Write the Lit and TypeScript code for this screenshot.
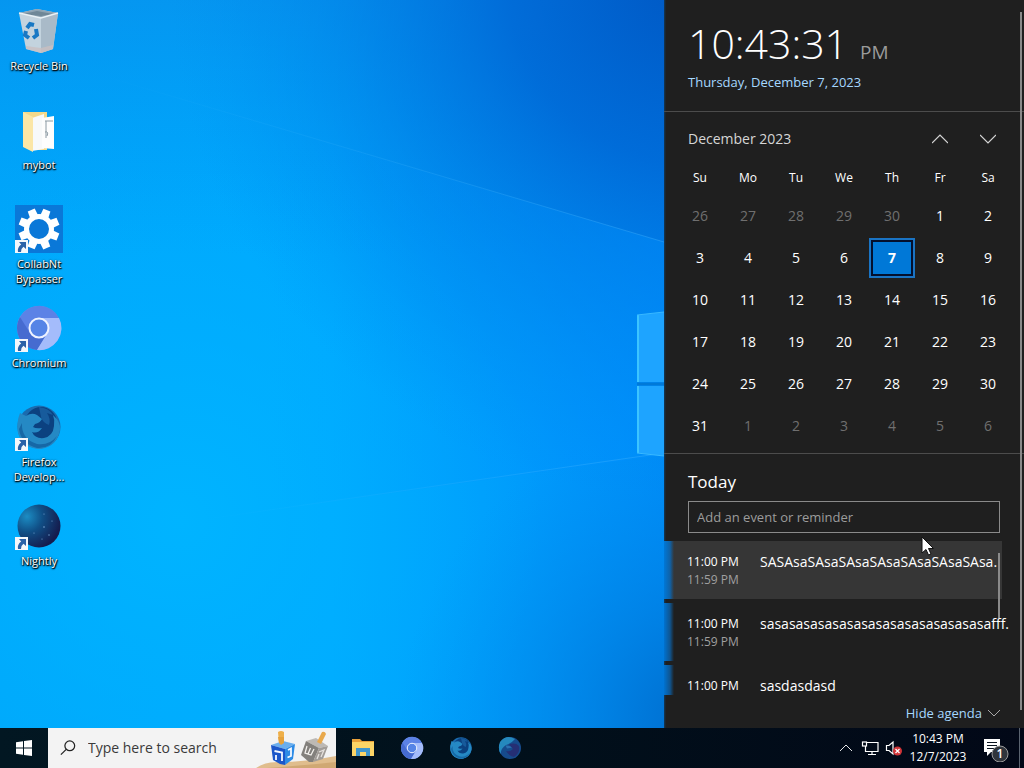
import { LitElement, html, css, svg, type TemplateResult } from "lit"
import { customElement, property, state } from "lit/decorators.js"
import { classMap } from "lit/directives/class-map.js"

interface AgendaEvent {
  start: string
  end?: string
  title: string
}

const recycleBin = svg`
  <svg viewBox="0 0 48 48">
    <path d="M4 6 L22 2 L43 6 L38 42 L26 46 L11 42 Z" fill="#c3d3de" />
    <path d="M4 6 L22 2 L43 6 L26 11 Z" fill="#8fa4b3" />
    <path d="M8 7 L22 4 L38 7 L26 9 Z" fill="#6f8797" />
    <path d="M26 11 L43 6 L38 42 L26 46 Z" fill="#a9bac8" />
    <path d="M11 39 L26 41 L38 38 V42 L26 46 L11 42 Z" fill="#c9bfc0" opacity="0.8" />
    <path d="M4 6 L26 11 L43 6" fill="none" stroke="#e8f1f6" stroke-width="1.4" />
    <g fill="none" stroke="#1878c4" stroke-width="4">
      <path d="M12 21 L15 17 L19 18" />
      <path d="M21 22 L22 28 L18 31" />
      <path d="M14 31 L10 28 L11 24" />
    </g>
  </svg>
`

const folder = svg`
  <svg viewBox="0 0 48 48">
    <path d="M8 6 H32 V44 H16 L8 40 Z" fill="#f3d98b" />
    <path d="M17 12 L29 8 V43 L17 45 Z" fill="#f7f9fa" />
    <path d="M27 12 L39 10 V43 L27 42 Z" fill="#fdfdfd" />
    <path d="M30 15 H38 M31 15 V32 M30 26 q4 -1 2 4" fill="none" stroke="#8c9aa3" stroke-width="1" />
    <path d="M8 6 L18 11 V46 L8 41 Z" fill="#fbe6a6" />
  </svg>
`

const gear = svg`
  <svg viewBox="0 0 48 48">
    <rect width="48" height="48" fill="#0a78d8" />
    <g fill="#fff">
      ${[0, 45, 90, 135, 180, 225, 270, 315].map(
        (a) => svg`<path d="M20 11 L20.500 3.500 H28 L28.500 11 Z" transform="rotate(${a + 22} 24 24)" />`
      )}
    </g>
    <circle cx="24" cy="24" r="12.500" fill="none" stroke="#fff" stroke-width="5" />
  </svg>
`

const chromium = svg`
  <svg viewBox="0 0 48 48">
    <circle cx="24" cy="24" r="22" fill="#7a9af2" />
    <path d="M24 24 L5 13 A22 22 0 0 0 22 46 L33 29 Z" fill="#466bd0" />
    <path d="M24 14 H44 A22 22 0 0 1 22 46 L33 28 Z" fill="#a4bcfb" />
    <path d="M24 14 H44 A22 22 0 0 0 5 13 L15 29 Z" fill="#5c82e6" />
    <circle cx="24" cy="24" r="9.500" fill="#5584e6" stroke="#eef3ff" stroke-width="2" />
  </svg>
`

const firefox = svg`
  <svg viewBox="0 0 48 48">
    <circle cx="24" cy="24" r="21.500" fill="#1b6bae" />
    <circle cx="26" cy="20" r="16" fill="#0b4180" />
    <path d="M24 4 Q34 5 38 12 L32 10 Q36 16 34 22 Q28 20 26 14 Z" fill="#175b9c" />
    <path d="M5 10 L11 13 Q17 9 22 12 L27 16 Q25 20 20 21 L18 24 Q21 26 27 25 Q23 31 17 29 Q20 36 29 35 Q38 33 39 23 Q40 17 38 12 Q46 19 45 27 Q42 43 26 46 Q8 46 3 30 Q1 20 5 10 Z" fill="#2589c4" />
    <path d="M7 20 Q6 36 22 41 Q34 43 42 33 Q36 46 22 45 Q6 41 4 26 Z" fill="#1668a6" />
  </svg>
`

const nightly = svg`
  <svg viewBox="0 0 48 48">
    <defs>
      <radialGradient id="night" cx="0.22" cy="0.28" r="0.8">
        <stop offset="0" stop-color="#1c8dc4" />
        <stop offset="0.45" stop-color="#104f86" />
        <stop offset="1" stop-color="#151c4e" />
      </radialGradient>
    </defs>
    <circle cx="24" cy="24" r="21.500" fill="url(#night)" />
    <g fill="#79a7d6">
      <circle cx="29" cy="12" r="0.600" />
      <circle cx="37" cy="19" r="0.600" />
      <circle cx="29" cy="25" r="0.800" />
      <circle cx="19" cy="31" r="0.600" />
      <circle cx="34" cy="33" r="0.700" />
      <circle cx="27" cy="37" r="0.600" />
    </g>
  </svg>
`

const nightlySmall = svg`
  <svg viewBox="0 0 48 48">
    <circle cx="24" cy="24" r="22" fill="#164b8c" />
    <path d="M4 12 Q16 -4 34 6 Q28 14 16 18 Q6 24 5 36 Q-1 24 4 12 Z" fill="#2588bd" />
    <path d="M22 17 Q34 12 42 20 Q45 34 32 42 Q22 40 16 30 Q24 32 30 26 Z" fill="#252f74" />
    <path d="M15 19 Q22 18 28 23 Q22 25 18 25 Z" fill="#2a6fb0" />
  </svg>
`

const shortcutArrow = svg`
  <svg class="shortcut" viewBox="0 0 13 13">
    <rect width="13" height="13" fill="#f4f7fb" />
    <path d="M4 2 H11 V9 L8.500 6.800 Q6 8.500 6 12 H3 Q2 7.500 6.200 4.500 Z" fill="#2b62a8" />
  </svg>
`

const explorer = svg`
  <svg viewBox="0 0 24 24">
    <path d="M1 3 H9 L11 5 H23 V20 H1 Z" fill="#e9a13a" />
    <path d="M1 6 H23 V20 H1 Z" fill="#fcd466" />
    <path d="M5 20 V12 H19 V20 H15 V16 H9 V20 Z" fill="#3f95cc" />
  </svg>
`

const windowsLogo = svg`
  <svg viewBox="0 0 16 16">
    <path d="M0 2.300 L7 1.300 V7.500 H0 Z M8 1.100 L16 0 V7.500 H8 Z M0 8.500 H7 V14.700 L0 13.700 Z M8 8.500 H16 V16 L8 14.900 Z" fill="#fff" />
  </svg>
`

const magnifier = svg`
  <svg class="magnifier" viewBox="0 0 18 18" fill="none" stroke="#222" stroke-width="1.400">
    <circle cx="11" cy="6.500" r="5.500" />
    <path d="M7 10.500 L1 16.500" />
  </svg>
`

const dreidels = svg`
  <svg class="dreidels" viewBox="0 0 80 40">
    <path d="M0 40 Q8 34 22 34 Q50 34 80 28 V40 Z" fill="#e0bd8d" />
    <path d="M10 40 Q40 38 80 34 V40 Z" fill="#d0a873" />
    <path d="M22 4 Q25 2 28 4 V15 H23 Z" fill="#eeaf49" />
    <path d="M15 17 L27 13 L39 16 L29 21 Z" fill="#6aaeee" />
    <path d="M22 9 H28 V15 L25 17 L23 15 Z" fill="#e5a13c" />
    <path d="M15 17 L29 21 V37 L24 36 L17 32 Z" fill="#1b56c9" />
    <path d="M29 21 L39 16 L37 31 L29 37 Z" fill="#2d8be6" />
    <path d="M18.500 23 L26 24.500 V33 M20 27 V32" fill="none" stroke="#f4f8ff" stroke-width="1.800" />
    <path d="M32 22 L35 20.500 V28 L31.500 29.500" fill="none" stroke="#f4f8ff" stroke-width="1.800" />
    <path d="M50 13 L60 10 L72 18 L63 20 Z" fill="#bdb9b4" />
    <path d="M66 4 Q69 3 70 6 L65 16 L61 14 Z" fill="#e9a94c" />
    <path d="M50 13 L63 20 L57 34 L53 34 L45 27 Z" fill="#83807c" />
    <path d="M63 20 L72 18 L67 31 L57 34 Z" fill="#a19c97" />
    <path d="M51 18 L49 25 L55 27 L58 21 M54.500 20 L52 26" fill="none" stroke="#f2efec" stroke-width="1.300" />
    <path d="M63 24 L68 22 L65 29 M63 26 L61 31" fill="none" stroke="#e6e2de" stroke-width="1.300" />
  </svg>
`

const chevron = (up: boolean) => svg`
  <svg class="chevron" viewBox="0 0 16 10" fill="none" stroke="currentColor" stroke-width="1.200">
    <path d=${up ? "M0 9 L8 1 L16 9" : "M0 1 L8 9 L16 1"} />
  </svg>
`

/**
 * desktop-icon - one shortcut in the desktop grid
 */
@customElement("desktop-icon")
export class DesktopIcon extends LitElement {
  static styles = css`
    :host {
      display: block;
    }

    button {
      display: flex;
      flex-direction: column;
      align-items: center;
      width: 100%;
      padding: 7px 0 0;
      border: 0;
      background: none;
      color: #fff;
      font: 11px/15px "Open Sans", "Noto Sans", sans-serif;
      text-shadow: 0 1px 2px #000, 1px 1px 1px #000, 0 0 2px rgba(0, 0, 0, 0.6);
    }

    .picture {
      position: relative;
      width: 48px;
      height: 48px;
      margin-bottom: 3px;
    }

    svg {
      display: block;
      width: 48px;
      height: 48px;
    }

    .shortcut {
      position: absolute;
      left: 0;
      bottom: 0;
      width: 13px;
      height: 13px;
    }

    .label {
      white-space: pre-line;
    }
  `

  @property({ type: String })
  label = ""

  @property({ type: Boolean })
  shortcut = false

  @property({ attribute: false })
  picture?: TemplateResult

  render() {
    return html`
      <button type="button">
        <span class="picture">
          ${this.picture}${this.shortcut ? shortcutArrow : ""}
        </span>
        <span class="label">${this.label}</span>
      </button>
    `
  }
}

/**
 * calendar-flyout - clock, month and agenda
 */
@customElement("calendar-flyout")
export class CalendarFlyout extends LitElement {
  static styles = css`
    :host {
      position: relative;
      display: flex;
      flex-direction: column;
      box-sizing: border-box;
      min-height: 0;
      background: linear-gradient(90deg, #123a5c, #1f1f1f 2px);
      color: #fff;
      font: 14px/20px "Open Sans", "Noto Sans", sans-serif;
    }

    button {
      padding: 0;
      border: 0;
      background: none;
      color: inherit;
      font: inherit;
    }

    header {
      padding: 16px 24px 19px;
      border-bottom: 1px solid #4c4c4c;
    }

    .clock {
      display: flex;
      align-items: baseline;
      gap: 12px;
      margin-bottom: 2px;
      font-size: 41px;
      font-weight: 300;
      line-height: 54px;
    }

    .clock small {
      color: #9b9b9b;
      font-size: 19px;
      font-weight: 400;
      line-height: 20px;
    }

    .date {
      display: block;
      color: #a6d8ff;
      font-size: 13px;
    }

    .month {
      padding: 0 12px 6px;
      border-bottom: 1px solid #4c4c4c;
    }

    .month-bar {
      display: flex;
      align-items: center;
      height: 54px;
      padding-left: 12px;
      color: #d6d6d6;
    }

    .month-bar h2 {
      flex: 1;
      margin: 0;
      font: inherit;
    }

    .month-bar button {
      width: 48px;
      height: 40px;
    }

    .chevron {
      width: 16px;
      height: 10px;
    }

    table {
      width: 100%;
      table-layout: fixed;
      border-spacing: 0;
    }

    th {
      height: 24px;
      padding: 0 0 5px;
      font-size: 12px;
      font-weight: 400;
      line-height: 24px;
    }

    td {
      height: 42px;
      padding: 0;
      text-align: center;
    }

    td button {
      width: 46px;
      height: 40px;
    }

    .outside {
      color: #6f6f6f;
    }

    .today {
      border: 2px solid #1a74c4;
      background: #0078d7;
      box-shadow: inset 0 0 0 2px #03102e;
      font-weight: 700;
    }

    .compose {
      padding: 12px 24px 8px;
    }

    .compose label {
      display: block;
      margin-bottom: 3px;
      font-size: 17px;
      line-height: 32px;
    }

    .compose input {
      display: block;
      box-sizing: border-box;
      width: 100%;
      height: 32px;
      padding: 0 8px;
      border: 1px solid #8a8a8a;
      border-radius: 0;
      background: transparent;
      color: #fff;
      font: 13px/20px "Open Sans", "Noto Sans", sans-serif;
    }

    .compose input::placeholder {
      color: #9c9c9c;
      opacity: 1;
    }

    .agenda {
      position: relative;
      flex: 1;
      min-height: 0;
      overflow: hidden;
    }

    ul {
      display: flex;
      flex-direction: column;
      gap: 4px;
      margin: 0;
      padding: 0 22px 0 0;
      list-style: none;
    }

    li {
      display: grid;
      grid-template-columns: 73px minmax(0, 1fr);
      box-sizing: border-box;
      height: 58px;
      padding: 12px 0 0 23px;
      background: linear-gradient(90deg, #0072d0, #0f5590 6px, #1f1f1f 10px);
      font-size: 12px;
      line-height: 18px;
    }

    li.hovered {
      background: linear-gradient(90deg, #0078d7, #0f62a8 6px, #363636 10px);
    }

    .title {
      font-size: 14px;
      white-space: nowrap;
    }

    .end {
      display: block;
      color: #a0a0a0;
    }

    footer {
      display: flex;
      justify-content: flex-end;
      box-sizing: border-box;
      height: 33px;
      padding: 2px 24px 0 0;
    }

    .hide {
      display: flex;
      align-items: center;
      gap: 6px;
      color: #a6d8ff;
      font-size: 13px;
    }

    .hide .chevron {
      width: 12px;
      height: 8px;
      color: #b8b8b8;
    }

    .agenda-thumb,
    .panel-thumb {
      position: absolute;
      width: 2px;
      background: #8a8a8a;
    }

    .agenda-thumb {
      top: 12px;
      right: 24px;
      height: 65px;
    }

    .panel-thumb {
      top: 12px;
      right: 2px;
      bottom: 18px;
    }
  `

  @state()
  private events: AgendaEvent[] = [
    { start: "11:00 PM", end: "11:59 PM", title: "SASAsaSAsaSAsaSAsaSAsaSAsaSAsa." },
    { start: "11:00 PM", end: "11:59 PM", title: "sasasasasasasasasasasasasasasasafff." },
    { start: "11:00 PM", title: "sasdasdasd" },
  ]

  private get weeks() {
    // the grid starts on Sunday, November 26
    const first = Date.UTC(2023, 10, 26)
    return Array.from({ length: 6 }, (_, w) =>
      Array.from({ length: 7 }, (_, d) => new Date(first + (w * 7 + d) * 86400000))
    )
  }

  private renderDay(date: Date) {
    const inMonth = date.getUTCMonth() === 11
    const day = date.getUTCDate()
    const classes = { outside: !inMonth, today: inMonth && day === 7 }
    return html`<td><button type="button" class=${classMap(classes)}>${day}</button></td>`
  }

  render() {
    return html`
      <header>
        <div class="clock">10:43:31 <small>PM</small></div>
        <button type="button" class="date">Thursday, December 7, 2023</button>
      </header>
      <section class="month">
        <div class="month-bar">
          <h2>December 2023</h2>
          <button type="button" aria-label="Previous month">${chevron(true)}</button>
          <button type="button" aria-label="Next month">${chevron(false)}</button>
        </div>
        <table>
          <thead>
            <tr>
              ${["Su", "Mo", "Tu", "We", "Th", "Fr", "Sa"].map((d) => html`<th>${d}</th>`)}
            </tr>
          </thead>
          <tbody>
            ${this.weeks.map((week) => html`<tr>${week.map((d) => this.renderDay(d))}</tr>`)}
          </tbody>
        </table>
      </section>
      <div class="compose">
        <label for="event">Today</label>
        <input id="event" type="text" placeholder="Add an event or reminder" />
      </div>
      <div class="agenda">
        <ul>
          ${this.events.map(
            (e, i) => html`
              <li class=${classMap({ hovered: i === 0 })}>
                <div>${e.start}${e.end ? html`<span class="end">${e.end}</span>` : ""}</div>
                <div class="title">${e.title}</div>
              </li>
            `
          )}
        </ul>
        <span class="agenda-thumb"></span>
      </div>
      <footer>
        <button type="button" class="hide">Hide agenda ${chevron(false)}</button>
      </footer>
      <span class="panel-thumb"></span>
    `
  }
}

/**
 * task-bar - start button, search box, pinned apps and tray
 */
@customElement("task-bar")
export class TaskBar extends LitElement {
  static styles = css`
    :host {
      display: flex;
      height: 40px;
      background: linear-gradient(90deg, #021722, #01101b 50%, #020817);
      color: #fff;
      font: 12px/18px "Open Sans", "Noto Sans", sans-serif;
    }

    button {
      display: flex;
      flex: none;
      align-items: center;
      justify-content: center;
      padding: 0;
      border: 0;
      background: none;
      color: inherit;
      font: inherit;
    }

    .start {
      width: 48px;
    }

    .start svg {
      width: 16px;
      height: 16px;
    }

    .search {
      display: flex;
      align-items: center;
      gap: 12px;
      box-sizing: border-box;
      width: 288px;
      padding-left: 12px;
      background: #f3f3f3;
    }

    .magnifier {
      flex: none;
      width: 16px;
      height: 16px;
    }

    .search input {
      flex: 1;
      min-width: 0;
      padding: 0;
      border: 0;
      background: none;
      font: 14px/20px "Open Sans", "Noto Sans", sans-serif;
    }

    .search input::placeholder {
      color: #3a3a3a;
      opacity: 1;
    }

    .dreidels {
      flex: none;
      width: 80px;
      height: 40px;
    }

    .apps {
      display: flex;
      flex: 1;
      padding-left: 2px;
    }

    .apps button {
      width: 49px;
    }

    .apps svg {
      width: 24px;
      height: 24px;
    }

    .tray {
      display: flex;
    }

    .tray button {
      width: 24px;
    }

    .tray .chevron {
      width: 12px;
      height: 8px;
    }

    .tray .glyph {
      width: 18px;
      height: 18px;
    }

    .tray .clock {
      flex-direction: column;
      width: 64px;
    }

    .tray .actions {
      width: 50px;
      border-right: 1px solid #5b6470;
      margin-right: 4px;
    }

    .actions svg {
      width: 28px;
      height: 28px;
    }
  `

  render() {
    return html`
      <button type="button" class="start" aria-label="Start">${windowsLogo}</button>
      <label class="search">
        ${magnifier}
        <input type="text" aria-label="Search" placeholder="Type here to search" />
        ${dreidels}
      </label>
      <div class="apps">
        <button type="button" aria-label="File Explorer">${explorer}</button>
        <button type="button" aria-label="Chromium">${chromium}</button>
        <button type="button" aria-label="Firefox">${firefox}</button>
        <button type="button" aria-label="Nightly">${nightlySmall}</button>
      </div>
      <div class="tray">
        <button type="button" aria-label="Show hidden icons">${chevron(true)}</button>
        <button type="button" aria-label="Network">
          <svg class="glyph" viewBox="0 0 18 18" fill="none" stroke="#fff" stroke-width="1.200">
            <path d="M6 3.500 H17 V12.500 H4.500 V7 M11 12.500 V15.500 M7 15.500 H15" />
            <rect x="1.500" y="3" width="4" height="4" />
          </svg>
        </button>
        <button type="button" aria-label="Volume">
          <svg class="glyph" viewBox="0 0 18 18">
            <path d="M1.500 6.500 H4 L8 3 V15 L4 11.500 H1.500 Z" fill="none" stroke="#fff" stroke-width="1.200" />
            <circle cx="12.500" cy="12" r="4.500" fill="#d13438" />
            <path d="M10.500 10 L14.500 14 M14.500 10 L10.500 14" stroke="#fff" stroke-width="1.200" />
          </svg>
        </button>
        <button type="button" class="clock"><span>10:43 PM</span><span>12/7/2023</span></button>
        <button type="button" class="actions" aria-label="1 new notification">
          <svg viewBox="0 0 28 28">
            <path d="M3 5 H19 V18 H10 L6 22 V18 H3 Z" fill="#fff" />
            <path d="M6 8.500 H16 M6 11.500 H16 M6 14.500 H13" stroke="#0a1420" stroke-width="1.200" />
            <circle cx="19" cy="20" r="8" fill="#30353c" stroke="#9a9a9a" />
            <text x="19" y="24" fill="#fff" font-size="12" font-weight="600" text-anchor="middle">1</text>
          </svg>
        </button>
      </div>
    `
  }
}

@customElement("app-root")
export class AppRoot extends LitElement {
  static styles = css`
    :host {
      position: relative;
      display: grid;
      grid-template-rows: minmax(0, 1fr) auto;
      height: 100vh;
      overflow: hidden;
    }

    .desktop {
      position: relative;
      display: grid;
      grid-template-columns: 1fr 360px;
      min-height: 0;
    }

    .wallpaper {
      position: absolute;
      inset: 0 360px 0 0;
      width: calc(100% - 360px);
      height: 100%;
    }

    .icons {
      position: relative;
      display: grid;
      grid-template-columns: 78px;
      grid-auto-rows: 99px;
    }

    .pointer {
      position: absolute;
      left: 921px;
      top: 536px;
      width: 13px;
      height: 20px;
    }
  `

  private shortcuts = [
    { label: "Recycle Bin", picture: recycleBin, shortcut: false },
    { label: "mybot", picture: folder, shortcut: false },
    { label: "CollabNt\nBypasser", picture: gear, shortcut: true },
    { label: "Chromium", picture: chromium, shortcut: true },
    { label: "Firefox\nDevelop...", picture: firefox, shortcut: true },
    { label: "Nightly", picture: nightly, shortcut: true },
  ]

  render() {
    return html`
      <main class="desktop">
        <svg class="wallpaper" viewBox="0 0 664 728" preserveAspectRatio="xMaxYMid slice">
          <defs>
            <linearGradient id="base" x1="0" y1="0" x2="1" y2="0">
              <stop offset="0" stop-color="#00a8fb" />
              <stop offset="0.5" stop-color="#00aaff" />
              <stop offset="0.8" stop-color="#009afb" />
              <stop offset="1" stop-color="#008cf8" />
            </linearGradient>
            <radialGradient id="corner" gradientUnits="userSpaceOnUse" cx="690" cy="-20" r="520">
              <stop offset="0" stop-color="#0058c4" />
              <stop offset="0.35" stop-color="#0066d4" stop-opacity="0.85" />
              <stop offset="1" stop-color="#0088ec" stop-opacity="0" />
            </radialGradient>
            <radialGradient id="glow" gradientUnits="userSpaceOnUse" cx="180" cy="520" r="360">
              <stop offset="0" stop-color="#00b4ff" />
              <stop offset="1" stop-color="#00b0ff" stop-opacity="0" />
            </radialGradient>
            <linearGradient id="top" x1="0" y1="0" x2="0" y2="1">
              <stop offset="0" stop-color="#0a84e4" stop-opacity="0.5" />
              <stop offset="0.35" stop-color="#0090f0" stop-opacity="0" />
            </linearGradient>
            <radialGradient id="floor" gradientUnits="userSpaceOnUse" cx="700" cy="720" r="300">
              <stop offset="0" stop-color="#006ccc" />
              <stop offset="0.4" stop-color="#007cdc" stop-opacity="0.6" />
              <stop offset="1" stop-color="#0090f0" stop-opacity="0" />
            </radialGradient>
            <linearGradient id="ray" x1="0" y1="0" x2="1" y2="0">
              <stop offset="0" stop-color="#4cc0ff" stop-opacity="0" />
              <stop offset="1" stop-color="#4cb8ff" stop-opacity="0.35" />
            </linearGradient>
            <linearGradient id="beam" x1="0" y1="0" x2="1" y2="0">
              <stop offset="0.3" stop-color="#0098ff" stop-opacity="0" />
              <stop offset="1" stop-color="#0090ff" stop-opacity="0.4" />
            </linearGradient>
          </defs>
          <rect width="664" height="728" fill="url(#base)" />
          <rect width="664" height="728" fill="url(#glow)" />
          <rect width="664" height="728" fill="url(#top)" />
          <rect width="664" height="728" fill="url(#corner)" />
          <rect width="664" height="728" fill="url(#floor)" />
          <path d="M100 75 L664 242 V455 L200 520 Z" fill="url(#beam)" />
          <path d="M100 75 L664 242" stroke="url(#ray)" />
          <path d="M200 520 L664 453" stroke="url(#ray)" />
          <path d="M637 315 L664 312 V382 H637 Z M637 386 H664 V456 L637 453 Z" fill="#1ea4ff" />
          <path d="M638 315 V382 M638 386 V453" stroke="#3cc4ff" stroke-width="2" />
          <path d="M637 315 L664 312 M637 453 L664 456" stroke="#38b8ff" />
          <path d="M637 384 H664" stroke="#0079d8" stroke-width="3" />
        </svg>
        <div class="icons">
          ${this.shortcuts.map(
            (s) => html`
              <desktop-icon .label=${s.label} .picture=${s.picture} ?shortcut=${s.shortcut}></desktop-icon>
            `
          )}
        </div>
        <calendar-flyout></calendar-flyout>
      </main>
      <task-bar></task-bar>
      <svg class="pointer" viewBox="0 0 13 20">
        <path d="M1 1 V17 L5 13.500 L7.500 19 L10 18 L7.500 12.500 H12.500 Z" fill="#fff" stroke="#111" />
      </svg>
    `
  }
}
